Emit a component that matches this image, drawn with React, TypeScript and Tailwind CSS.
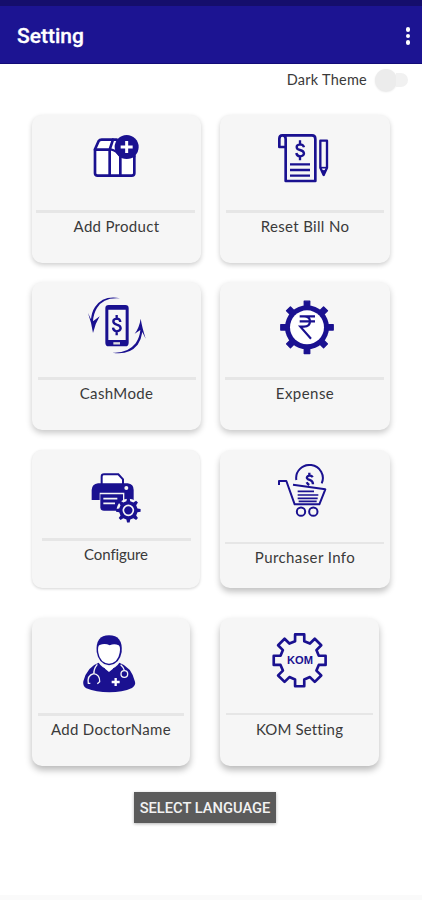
import React, { useState } from 'react';
import clsx from 'clsx';

const INK = '#1a1190';

// Closed outline of a cog with straight teeth, starting from the top one
const gearPath = (cx: number, cy: number, outer: number, inner: number, topHalf: number, baseHalf: number, teeth = 8) => {
  const points: string[] = [];
  for (let i = 0; i < teeth; i++) {
    const mid = (i * 360) / teeth - 90;
    const corners = [
      [inner, mid - baseHalf],
      [outer, mid - topHalf],
      [outer, mid + topHalf],
      [inner, mid + baseHalf],
    ];
    corners.forEach(([r, deg]) => {
      const rad = (deg * Math.PI) / 180;
      points.push(`${(cx + r * Math.cos(rad)).toFixed(1)} ${(cy + r * Math.sin(rad)).toFixed(1)}`);
    });
  }
  return `M${points.join('L')}Z`;
};

const ProductIcon = () => (
  <g fill="none" stroke={INK} strokeWidth="8" strokeLinejoin="round" strokeLinecap="round">
    <path d="M225 133 L236 108 Q239 103 245 103 H290 L344 150 V205 Q344 213 336 213 H233 Q225 213 225 205 Z" fill="#fff" stroke="none" />
    <path d="M225 133 L236 108 Q239 104 245 104 H290 M225 133 V205 Q225 212 233 212 H335 Q343 212 343 205 V150" />
    <path d="M225 134 H268 M269 134 V212 M301 156 V212 M269 134 L279 104" />
    <path d="M272 133 Q290 136 301 154 H343" strokeWidth="7" />
    <circle cx="320" cy="126" r="36" fill={INK} stroke="none" />
    <path d="M320 108 V144 M302 126 H338" stroke="#fff" strokeWidth="9" strokeLinecap="butt" />
  </g>
);

const BillIcon = () => (
  <g fill="none" stroke={INK} strokeWidth="8" strokeLinejoin="round">
    <path d="M218 91 H306 Q316 91 316 102 V228 H227 V102 Q227 91 217 91 Q208 91 208 102 V126 H227" />
    <path d="M240 178 H300 M240 195 H300 M240 212 H300" strokeWidth="7" />
    <path d="M282 127 Q280 118 270 118 Q260 119 260 126 Q260 133 270 135 Q282 138 282 146 Q281 153 270 154 Q260 153 259 144 M270 106 V118 M270 154 V166" strokeWidth="7" />
    <path d="M331 107 H351 V188 L341 210 L331 188 Z" strokeWidth="7" />
    <path d="M331 188 H351" strokeWidth="5" />
    <path d="M335 197 H347 L341 212 Z" fill={INK} strokeWidth="3" />
  </g>
);

const CashIcon = () => (
  <g fill={INK}>
    <path d="M300 70 Q250 66 231 99 Q220 117 219 139 L239 124 Q226 145 219 174 Q215 145 204 114 L213 133 Q215 111 225 96 Q250 60 300 70 Z" />
    <path d="M277 233 Q323 236 347 205 Q359 187 361 165 L344 176 Q358 158 362 131 Q366 156 377 191 L367 171 Q364 193 353 209 Q326 242 277 233 Z" />
    <path fillRule="evenodd" d="M266 90 H316 Q326 90 326 100 V203 Q326 214 316 214 H266 Q256 214 256 203 V100 Q256 90 266 90 Z M265 104 V195 H317 V104 Z" />
    <path d="M280 205 H300" stroke="#ddd" strokeWidth="7" />
    <path d="M301 141 Q300 131 290 131 Q280 132 280 139 Q280 146 290 149 Q302 152 302 160 Q301 168 290 169 Q280 168 279 158 M290 120 V131 M290 169 V181" fill="none" stroke={INK} strokeWidth="7" />
  </g>
);

const ExpenseIcon = () => (
  <g>
    <path d={gearPath(291, 157, 79, 62, 6, 7.5)} fill={INK} stroke={INK} strokeWidth="4" strokeLinejoin="round" />
    <circle cx="291" cy="157" r="66" fill={INK} />
    <circle cx="291" cy="157" r="51" fill="#fff" />
    <path d="M269 124 H315 M269 139 H315 M269 124 H282 Q300 124 300 139 Q300 155 282 155 H271 L303 191" fill="none" stroke={INK} strokeWidth="6.5" />
  </g>
);

const PrinterIcon = () => (
  <g>
    <path d="M245 132 V110 Q245 103 252 103 H295 L309 118 V132" fill="#fff" stroke={INK} strokeWidth="6" />
    <path d="M234 130 H323 Q341 132 341 150 V180 H313 V158 H239 V180 H215 V150 Q216 132 234 130 Z" fill={INK} />
    <circle cx="319" cy="144" r="6" fill="#f6f6f6" />
    <path d="M241 163 H309 V212 H252 Q241 212 241 202 Z" fill={INK} />
    <path d="M250 176 H292 M250 190 H285" stroke="#f6f6f6" strokeWidth="5" />
    <circle cx="325" cy="211" r="35" fill="#f6f6f6" />
    <path d={gearPath(325, 211, 37, 28, 6, 12)} fill={INK} />
    <circle cx="325" cy="211" r="15" fill="none" stroke="#f6f6f6" strokeWidth="5" />
  </g>
);

const CartIcon = () => (
  <g fill="none" stroke={INK} strokeWidth="6" strokeLinejoin="round">
    <path d="M207 135 V123 H229 L254 193 H328 L346 148 L249 134" />
    <path d="M259 120 A40 39 0 1 1 335 130" />
    <path d="M263 154 H312 M263 165 H325 M263 175 H323 M266 184 H320" strokeWidth="5" />
    <path d="M308 112 Q305 106 298 107 Q289 109 291 115 Q293 119 300 120 Q309 123 309 133 M298 98 V107 M290 127 Q293 133 298 135" strokeWidth="7" />
    <circle cx="273" cy="215" r="12.5" />
    <circle cx="310" cy="215" r="12.5" />
  </g>
);

const DoctorIcon = () => (
  <g>
    <path d="M236 158 Q246 175 267 177 Q288 175 298 158 Q334 170 345 215 Q348 225 336 234 Q307 247 268 247 Q228 247 199 235 Q187 228 190 214 Q201 170 236 158 Z" fill={INK} />
    <path d="M230 126 Q226 76 267 76 Q309 76 305 126 Q299 163 267 166 Q236 163 230 126 Z" fill={INK} />
    <path d="M235 128 Q232 108 239 105 Q255 99 269 106 Q283 99 296 106 Q302 110 299 128 Q294 158 267 161 Q240 158 235 128 Z" fill="#fff" />
    <path d="M246 163 Q267 176 288 163 L278 177 L267 186 L256 177 Z" fill="#fff" />
    <g fill="none" stroke="#f6f6f6" strokeWidth="4">
      <path d="M232 163 Q220 178 222 191 M211 220 H205 Q201 196 221 191 Q240 194 239 215 L232 221" />
      <path d="M302 164 Q311 172 313 181" />
      <circle cx="313" cy="192" r="10" />
    </g>
    <path d="M287 204 V228 M275 216 H299" stroke="#fff" strokeWidth="7" />
  </g>
);

const KomIcon = () => (
  <g>
    <path d={gearPath(269, 151, 79, 59, 10, 13.5)} fill="none" stroke={INK} strokeWidth="8" strokeLinejoin="round" />
    <text x="270" y="161" textAnchor="middle" fontFamily="Liberation Sans, sans-serif" fontWeight="700" fontSize="31" textLength="78" lengthAdjust="spacingAndGlyphs" fill={INK}>
      KOM
    </text>
  </g>
);

interface SettingItem {
  label: string;
  icon: React.FC;
  viewBox: string;
  card: string;
  iconArea: string;
  svg: string;
  divider: string;
  text: string;
}

const rows: { className: string; items: SettingItem[] }[] = [
  {
    className: 'h-[148px]',
    items: [
      { label: 'Add Product', icon: ProductIcon, viewBox: '210 75 180 180', card: 'w-[169px] shadow-[0_2px_5px_rgba(0,0,0,0.2)]', iconArea: 'h-[95px] pt-[15px]', svg: 'ml-[58px]', divider: 'ml-1 w-[159px] h-[3px]', text: 'mt-[3px] tracking-[0.3px]' },
      { label: 'Reset Bill No', icon: BillIcon, viewBox: '195 75 180 180', card: 'w-[170px] shadow-[0_2px_5px_rgba(0,0,0,0.2)]', iconArea: 'h-[95px] pt-[15px]', svg: 'ml-[55px]', divider: 'ml-1.5 w-[158px] h-[3px]', text: 'mt-[3px] tracking-[0.35px]' },
    ],
  },
  {
    className: 'mt-[19px] h-[148px]',
    items: [
      { label: 'CashMode', icon: CashIcon, viewBox: '201 63 180 180', card: 'w-[169px] shadow-[0_3px_6px_rgba(0,0,0,0.22)]', iconArea: 'h-[95px] pt-[14px]', svg: 'ml-[55px]', divider: 'ml-1.5 w-[158px] h-[3px]', text: 'mt-[3px] tracking-[0.35px]' },
      { label: 'Expense', icon: ExpenseIcon, viewBox: '201 66 180 180', card: 'w-[170px] shadow-[0_3px_6px_rgba(0,0,0,0.22)]', iconArea: 'h-[95px] pt-[15px]', svg: 'ml-[57px]', divider: 'ml-[5px] w-[159px] h-[3px]', text: 'mt-[3px] tracking-[0.45px]' },
    ],
  },
  {
    className: 'mt-[20px] h-[138px]',
    items: [
      { label: 'Configure', icon: PrinterIcon, viewBox: '201 84 180 180', card: 'w-[168px] shadow-[0_1px_3px_rgba(0,0,0,0.17)]', iconArea: 'h-[88px] pt-[18px]', svg: 'ml-[55px]', divider: 'ml-2.5 w-[149px] h-[3px]', text: 'mt-[3px] tracking-[-0.1px]' },
      { label: 'Purchaser Info', icon: CartIcon, viewBox: '195 72 180 180', card: 'w-[170px] shadow-[0_4px_6px_rgba(0,0,0,0.24)]', iconArea: 'h-[92px] pt-[14px]', svg: 'ml-[55px]', divider: 'ml-[5px] w-[159px] h-[2px]', text: 'mt-[3px] tracking-[0.4px]' },
    ],
  },
  {
    className: 'mt-[30px] h-[148px]',
    items: [
      { label: 'Add DoctorName', icon: DoctorIcon, viewBox: '180 72 180 180', card: 'w-[158px] shadow-[0_4px_7px_rgba(0,0,0,0.28)]', iconArea: 'h-[95px] pt-4', svg: 'ml-[48px]', divider: 'ml-1.5 w-[146px] h-[3px]', text: 'mt-[3px] tracking-[0.3px]' },
      { label: 'KOM Setting', icon: KomIcon, viewBox: '180 63 180 180', card: 'w-[159px] shadow-[0_4px_7px_rgba(0,0,0,0.28)]', iconArea: 'h-[95px] pt-[13px]', svg: 'ml-[50px]', divider: 'ml-1.5 w-[147px] h-[2px]', text: 'mt-1 tracking-[0.15px]' },
    ],
  },
];

const SettingCard = ({ item }: { item: SettingItem }) => {
  const Icon = item.icon;
  return (
    <button className={clsx('flex flex-col rounded-[10px] bg-[#f6f6f6]', item.card)}>
      <div className={clsx('shrink-0', item.iconArea)}>
        <svg viewBox={item.viewBox} className={clsx('block h-[60px] w-[60px]', item.svg)}>
          <Icon />
        </svg>
      </div>
      <div className={clsx('shrink-0 bg-[#e6e6e6]', item.divider)} />
      <span className={clsx('self-center whitespace-nowrap text-[15px] leading-5 text-[#3a3a3a]', item.text)}>{item.label}</span>
    </button>
  );
};

const App = () => {
  const [dark, setDark] = useState(false);

  return (
    <div className="flex h-[900px] w-[422px] flex-col overflow-hidden bg-white font-['Lato',sans-serif]">
      <div className="h-[6px] shrink-0 bg-[#150e6c]" />
      <header className="flex h-[58px] shrink-0 items-center justify-between border-b border-[#120b78] bg-[#1c1492] pl-[17px] pr-[12px] pt-[3px]">
        <h1 className="pt-px font-['Roboto',sans-serif] text-[21px] font-medium text-white [-webkit-text-stroke:0.3px_white]">Setting</h1>
        <button className="flex flex-col gap-[2px]">
          <span className="h-[4.5px] w-[4.5px] rounded-full bg-white" />
          <span className="h-[4.5px] w-[4.5px] rounded-full bg-white" />
          <span className="h-[4.5px] w-[4.5px] rounded-full bg-white" />
        </button>
      </header>

      <div className="flex h-[32px] shrink-0 items-center justify-end pr-[14px]">
        <span className="text-[14.5px] tracking-[0.25px] text-[#3a3a3a]">Dark Theme</span>
        <button
          onClick={() => setDark(!dark)}
          className="ml-2 flex h-[22px] w-[33px] items-center"
        >
          <span className="h-[22px] w-[22px] shrink-0 rounded-full bg-[#ececec] shadow-[0_1px_2px_rgba(0,0,0,0.1)]" />
          <span className="-ml-px h-[14px] w-[12px] rounded-r-full bg-[#f1f1f1]" />
        </button>
      </div>

      <main className="mt-[19px] flex flex-col pl-8">
        {rows.map((row, i) => (
          <div key={i} className={clsx('grid grid-cols-[188px_170px]', row.className)}>
            {row.items.map(item => (
              <SettingCard key={item.label} item={item} />
            ))}
          </div>
        ))}
      </main>

      <button className="ml-[134px] mt-[26px] h-[31px] w-[142px] shrink-0 bg-[#5b5b5b] pt-px font-['Roboto',sans-serif] text-[14.7px] font-medium text-[#f2f2f2] shadow-[0_1px_3px_rgba(0,0,0,0.3)]">
        SELECT LANGUAGE
      </button>

      <div className="mt-auto h-[5px] shrink-0 bg-[#fafafa]" />
    </div>
  );
};

export default App;
